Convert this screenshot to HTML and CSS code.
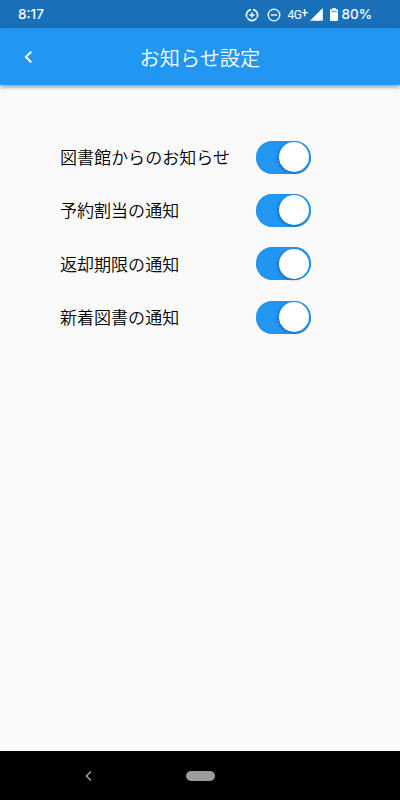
FILE: index.html
```html
<!DOCTYPE html>
<html lang="ja">
<head>
  <meta charset="UTF-8" />
  <meta name="viewport" content="width=device-width, initial-scale=1.0"/>
  <title>お知らせ設定</title>
  <link rel="stylesheet" href="styles.css">
</head>
<body>
  <div class="screen">
    <div class="status-bar">
      <span class="clock">8:17</span>
      <svg class="icon-saver" width="14" height="14" viewBox="0 0 14 14" fill="none" stroke="#fff">
        <path d="M6 1.6A5.5 5.5 0 0 0 2 9.5M8 1.6A5.5 5.5 0 0 1 12 9.5M2.4 10.1A5.5 5.5 0 0 0 11.6 10.1" stroke-width="1.6"/>
        <path d="M7 4.4V9.6M4.4 7H9.6" stroke-width="1.4"/>
      </svg>
      <svg class="icon-dnd" width="14" height="14" viewBox="0 0 14 14" fill="none" stroke="#fff" stroke-width="1.3">
        <circle cx="7" cy="7" r="5.8"/>
        <path d="M3.8 7H10.2"/>
      </svg>
      <span class="network">4G<span class="plus">+</span></span>
      <svg class="icon-signal" width="13" height="13" viewBox="0 0 13 13" fill="#fff">
        <path d="M0 12.8L12.8 0V12.8Z"/>
      </svg>
      <svg class="icon-battery" width="8" height="13" viewBox="0 0 8 13">
        <path d="M2.3 0H5.7V1.2H7.2Q8 1.2 8 2V12.2Q8 13 7.2 13H.8Q0 13 0 12.2V2Q0 1.2 .8 1.2H2.3Z" fill="#fff"/>
        <path d="M1.2 2.8H6.8V4.1H1.2Z" fill="#6fa4d2"/>
      </svg>
      <span class="battery">80%</span>
    </div>

    <header class="app-bar">
      <svg class="back" width="10" height="14" viewBox="0 0 10 14" fill="none" stroke="#fff" stroke-width="2">
        <path d="M8.3 1.6L2.9 7L8.3 12.4"/>
      </svg>
      <h1>お知らせ設定</h1>
    </header>

    <main class="settings">
      <label class="row">
        <span class="name">図書館からのお知らせ</span>
        <input class="switch" type="checkbox" checked />
      </label>
      <label class="row">
        <span class="name">予約割当の通知</span>
        <input class="switch" type="checkbox" checked />
      </label>
      <label class="row">
        <span class="name">返却期限の通知</span>
        <input class="switch" type="checkbox" checked />
      </label>
      <label class="row">
        <span class="name">新着図書の通知</span>
        <input class="switch" type="checkbox" checked />
      </label>
    </main>

    <nav class="nav-bar">
      <svg class="nav-back" width="8" height="12" viewBox="0 0 8 12" fill="none" stroke="#9c9c9c" stroke-width="1.6">
        <path d="M6 1.5L1.4 6L6 10.5"/>
      </svg>
      <span class="nav-home"></span>
    </nav>
  </div>
</body>
</html>
```

FILE: styles.css
```css
* {
  box-sizing: border-box;
}

body {
  margin: 0;
  background-color: #fafafa;
  color: #000;
  font-family: "Noto Sans CJK JP", sans-serif;
}

.screen {
  display: flex;
  flex-direction: column;
  height: 800px;
}

.status-bar {
  display: flex;
  align-items: center;
  height: 28px;
  padding-left: 18px;
  padding-top: 1px;
  background-color: #1a70b8;
  color: #fff;
  font-family: Inter, sans-serif;
  line-height: 26px;
}

.clock {
  width: 226.5px;
  padding-bottom: 1px;
  font-size: 13.5px;
  font-weight: 500;
}

.icon-dnd {
  margin-left: 8.5px;
}

.network {
  width: 22px;
  margin-left: 6.5px;
  font-family: Roboto, sans-serif;
  font-size: 12px;
  letter-spacing: -0.6px;
  white-space: nowrap;
}

.plus {
  position: relative;
  top: -2px;
  font-weight: 500;
}

.icon-battery {
  margin-left: 7px;
}

.battery {
  margin-left: 4px;
  padding-bottom: 1px;
  font-size: 13.5px;
  font-weight: 500;
}

.app-bar {
  display: flex;
  align-items: center;
  height: 57px;
  padding-left: 23px;
  background-color: #2196f3;
  color: #fff;
  box-shadow: 0 2px 4px rgba(0, 0, 0, 0.4);
}

.app-bar h1 {
  margin: 0 0 0 106.5px;
  padding-top: 2px;
  font-size: 20.2px;
  font-weight: 350;
  line-height: 30px;
}

.settings {
  flex: 1;
  padding: 45.4px 89.5px 0 60px;
}

.row {
  display: flex;
  align-items: center;
  justify-content: space-between;
  height: 53.4px;
}

.name {
  padding-bottom: 1.4px;
  font-size: 17.05px;
  font-weight: 350;
}

.switch {
  appearance: none;
  display: flex;
  align-items: center;
  justify-content: flex-end;
  width: 54.5px;
  height: 33px;
  margin: 0;
  padding-right: 1.5px;
  border-radius: 17px;
  background-color: #2196f3;
  box-shadow: inset 0 0 1px #1668ad;
}

.switch::before {
  content: "";
  width: 30px;
  height: 30px;
  border-radius: 50%;
  background-color: #fff;
  box-shadow: -1px 1px 3px rgba(0, 0, 0, 0.3);
}

.nav-bar {
  display: flex;
  align-items: center;
  height: 49px;
  padding-left: 85px;
  background-color: #000;
}

.nav-home {
  width: 29px;
  height: 10px;
  margin-left: 93px;
  border-radius: 5px;
  background-color: #9c9c9c;
}
```
